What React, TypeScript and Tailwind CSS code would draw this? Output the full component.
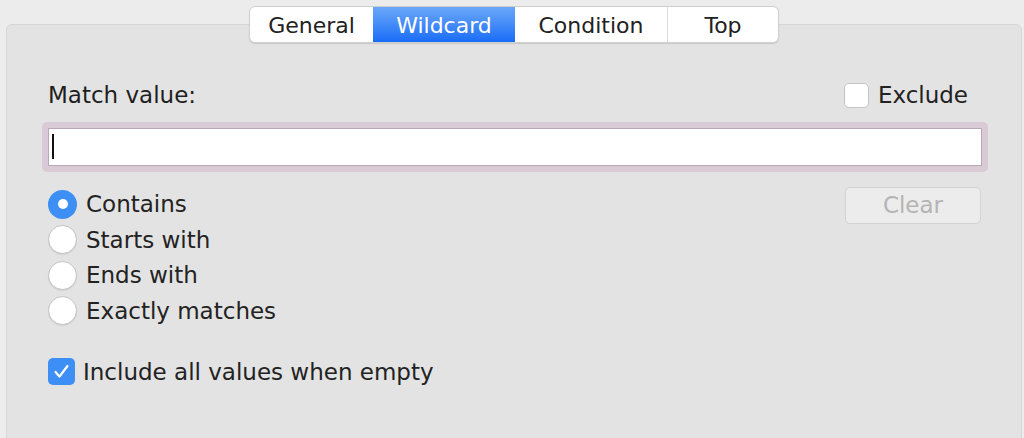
const font = "font-['Lucida_Grande','DejaVu_Sans',sans-serif]";

function Radio({ label, checked }: { label: string; checked?: boolean }) {
  return (
    <div className="flex h-[35.5px] items-center">
      {checked ? (
        <span className="flex h-[29px] w-[29px] items-center justify-center rounded-full bg-[#3d8ff5]">
          <span className="h-[10px] w-[10px] rounded-full bg-white" />
        </span>
      ) : (
        <span className="h-[29px] w-[29px] rounded-full border border-[#c2c2c2] bg-white shadow-[0_1px_1px_rgba(0,0,0,0.08)]" />
      )}
      <span className="ml-[9px] text-[#222]">{label}</span>
    </div>
  );
}

export default function App() {
  const tabs = ["General", "Wildcard", "Condition", "Top"];
  const widths = ["w-[123px]", "w-[142px]", "w-[152px]", "w-[111px]"];

  return (
    <div className={`h-[438px] w-[1024px] overflow-hidden bg-[#ececec] pl-[6px] pr-[2px] pt-[24px] text-[23px] ${font}`}>
      <div className="h-[440px] rounded-[6px] border border-[#d6d6d6] bg-[#e3e3e3]">
        {/* segmented tabs */}
        <div className="-mt-[19px] flex justify-center">
          <div className="flex h-[37px] overflow-hidden rounded-[6px] border border-[#cfcfcf] bg-white text-[22px] shadow-[0_1px_1px_rgba(0,0,0,0.12)]">
            {tabs.map((t, i) => (
              <div
                key={t}
                className={`flex items-center justify-center pt-[2px] ${widths[i]} ${
                  i === 1
                    ? "bg-gradient-to-b from-[#6aa7f9] to-[#176cf6] text-white"
                    : "text-[#222]"
                } ${i === 3 ? "border-l border-[#dcdcdc]" : ""}`}
              >
                {t}
              </div>
            ))}
          </div>
        </div>

        <div className="pl-[35px] pr-[33px] pt-[35px]">
          <div className="flex items-center justify-between pl-[6px] pr-[20px]">
            <span className="text-[#1e1e1e]">Match value:</span>
            <label className="flex items-center">
              <span className="h-[25px] w-[25px] rounded-[5px] border border-[#c4c4c4] bg-white" />
              <span className="ml-[9px] text-[#222]">Exclude</span>
            </label>
          </div>

          <div className="mt-[9px] rounded-[5px] bg-[#d9cbd6] p-[6px]">
            <div className="flex h-[38px] items-center border border-[#b9a9b6] bg-white pl-[3px]">
              <span className="h-[25px] w-[2px] bg-[#111]" />
            </div>
          </div>

          <div className="mt-[15px] flex justify-between pl-[6px] pr-[7px]">
            <div>
              <Radio label="Contains" checked />
              <Radio label="Starts with" />
              <Radio label="Ends with" />
              <Radio label="Exactly matches" />
            </div>
            <button className="h-[37px] w-[136px] rounded-[5px] border border-[#d2d2d2] bg-[#ececec] text-[#b4b4b4]">
              Clear
            </button>
          </div>

          <div className="mt-[26px] flex items-center pl-[6px]">
            <span className="flex h-[27px] w-[27px] items-center justify-center rounded-[5px] bg-[#3d8ff5]">
              <svg width="19" height="19" viewBox="0 0 19 19" fill="none">
                <path d="M3.5 10l4 4.5L15.5 4" stroke="white" strokeWidth="2.2" strokeLinecap="round" strokeLinejoin="round" />
              </svg>
            </span>
            <span className="ml-[8px] text-[#222]">Include all values when empty</span>
          </div>
        </div>
      </div>
    </div>
  );
}
